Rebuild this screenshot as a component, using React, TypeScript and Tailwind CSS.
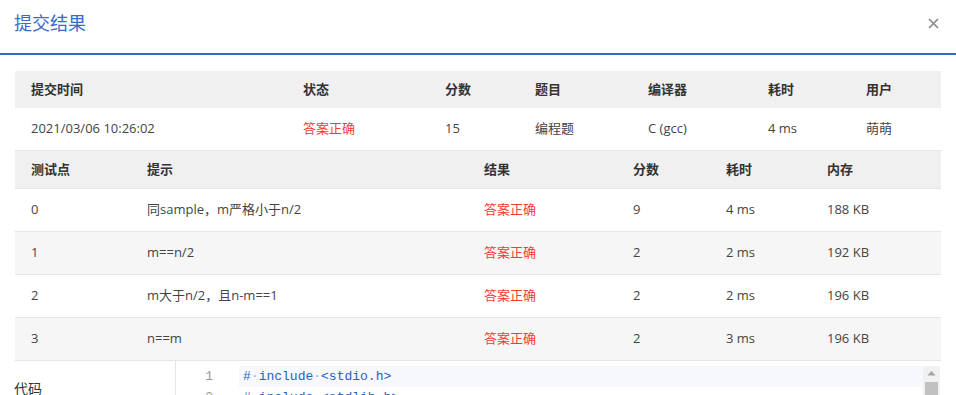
const summaryCols = ["272px", "142px", "90px", "113px", "120px", "98px", "91px"];
const caseCols = ["116px", "337px", "149px", "93px", "101px", "130px"];

const cases = [
  { id: "0", hint: "同sample，m严格小于n/2", score: "9", time: "4 ms", mem: "188 KB" },
  { id: "1", hint: "m==n/2", score: "2", time: "2 ms", mem: "192 KB" },
  { id: "2", hint: "m大于n/2，且n-m==1", score: "2", time: "2 ms", mem: "196 KB" },
  { id: "3", hint: "n==m", score: "2", time: "3 ms", mem: "196 KB" },
];

function Cell({ children, red }: { children: React.ReactNode; red?: boolean }) {
  return (
    <div className={`pl-4 flex items-center whitespace-nowrap ${red ? "text-[#f53a35]" : ""}`}>
      {children}
    </div>
  );
}

function Dot() {
  return <span className="text-[#9fb3d1]">·</span>;
}

export default function App() {
  return (
    <div
      className="w-[956px] h-[395px] overflow-hidden bg-white text-[13px] text-[#444]"
      style={{ fontFamily: '"Open Sans", "Noto Sans CJK SC", sans-serif' }}
    >
      <div className="h-[55px] flex items-center justify-between pl-[14px] pr-[17px] border-b-2 border-[#3567c6]">
        <span className="text-[18px] text-[#3a6bc9] -mt-[6px]">提交结果</span>
        <svg width="11" height="11" viewBox="0 0 11 11" className="-mt-[6px]">
          <path d="M1 1L10 10M10 1L1 10" stroke="#8a8a8a" strokeWidth="1.7" />
        </svg>
      </div>

      <div className="mx-[15px] mt-[16px]">
        <div
          className="grid h-[37px] bg-[#f0f0f0] font-semibold text-[#333]"
          style={{ gridTemplateColumns: summaryCols.join(" ") }}
        >
          {["提交时间", "状态", "分数", "题目", "编译器", "耗时", "用户"].map((h) => (
            <Cell key={h}>{h}</Cell>
          ))}
        </div>
        <div
          className="grid h-[43px] border-b border-[#e6e6e6]"
          style={{ gridTemplateColumns: summaryCols.join(" ") }}
        >
          <Cell>2021/03/06 10:26:02</Cell>
          <Cell red>答案正确</Cell>
          <Cell>15</Cell>
          <Cell>编程题</Cell>
          <Cell>C (gcc)</Cell>
          <Cell>4 ms</Cell>
          <Cell>萌萌</Cell>
        </div>

        <div
          className="grid h-[38px] bg-[#f0f0f0] font-semibold text-[#333] border-b border-[#e6e6e6]"
          style={{ gridTemplateColumns: caseCols.join(" ") }}
        >
          {["测试点", "提示", "结果", "分数", "耗时", "内存"].map((h) => (
            <Cell key={h}>{h}</Cell>
          ))}
        </div>
        {cases.map((c, i) => (
          <div
            key={c.id}
            className={`grid h-[43px] border-b border-[#e6e6e6] ${i % 2 ? "bg-[#f6f6f6]" : "bg-white"}`}
            style={{ gridTemplateColumns: caseCols.join(" ") }}
          >
            <Cell>{c.id}</Cell>
            <Cell>{c.hint}</Cell>
            <Cell red>答案正确</Cell>
            <Cell>{c.score}</Cell>
            <Cell>{c.time}</Cell>
            <Cell>{c.mem}</Cell>
          </div>
        ))}
      </div>

      <div className="flex h-[40px]">
        <div className="w-[175px] pl-[14px] pt-[17px] text-[14px] text-[#333]">代码</div>
        <div className="flex-1 mr-[16px] border-l border-[#e6e6e6] flex pt-[5px]">
          <div
            className="flex-1 text-[13px] leading-[21px]"
            style={{ fontFamily: '"Liberation Mono", monospace' }}
          >
            <div className="flex">
              <div className="w-[63px] pr-[26px] text-right text-[#999]">1</div>
              <div className="flex-1 bg-[#f6f8fb] pl-[4px] text-[#2462c2]">
                #<Dot />include<Dot />&lt;stdio.h&gt;
              </div>
            </div>
            <div className="flex">
              <div className="w-[63px] pr-[26px] text-right text-[#999]">2</div>
              <div className="flex-1 pl-[4px] text-[#2462c2]">
                #<Dot />include<Dot />&lt;stdlib.h&gt;
              </div>
            </div>
          </div>
          <div className="w-[17px] bg-[#f1f1f1] flex flex-col items-center">
            <svg width="9" height="6" viewBox="0 0 9 6" className="mt-[4px]">
              <path d="M0.5 5.5L4.5 1L8.5 5.5Z" fill="#a3a3a3" />
            </svg>
            <div className="mt-[6px] w-[13px] flex-1 bg-[#c1c1c1]" />
          </div>
        </div>
      </div>
    </div>
  );
}
